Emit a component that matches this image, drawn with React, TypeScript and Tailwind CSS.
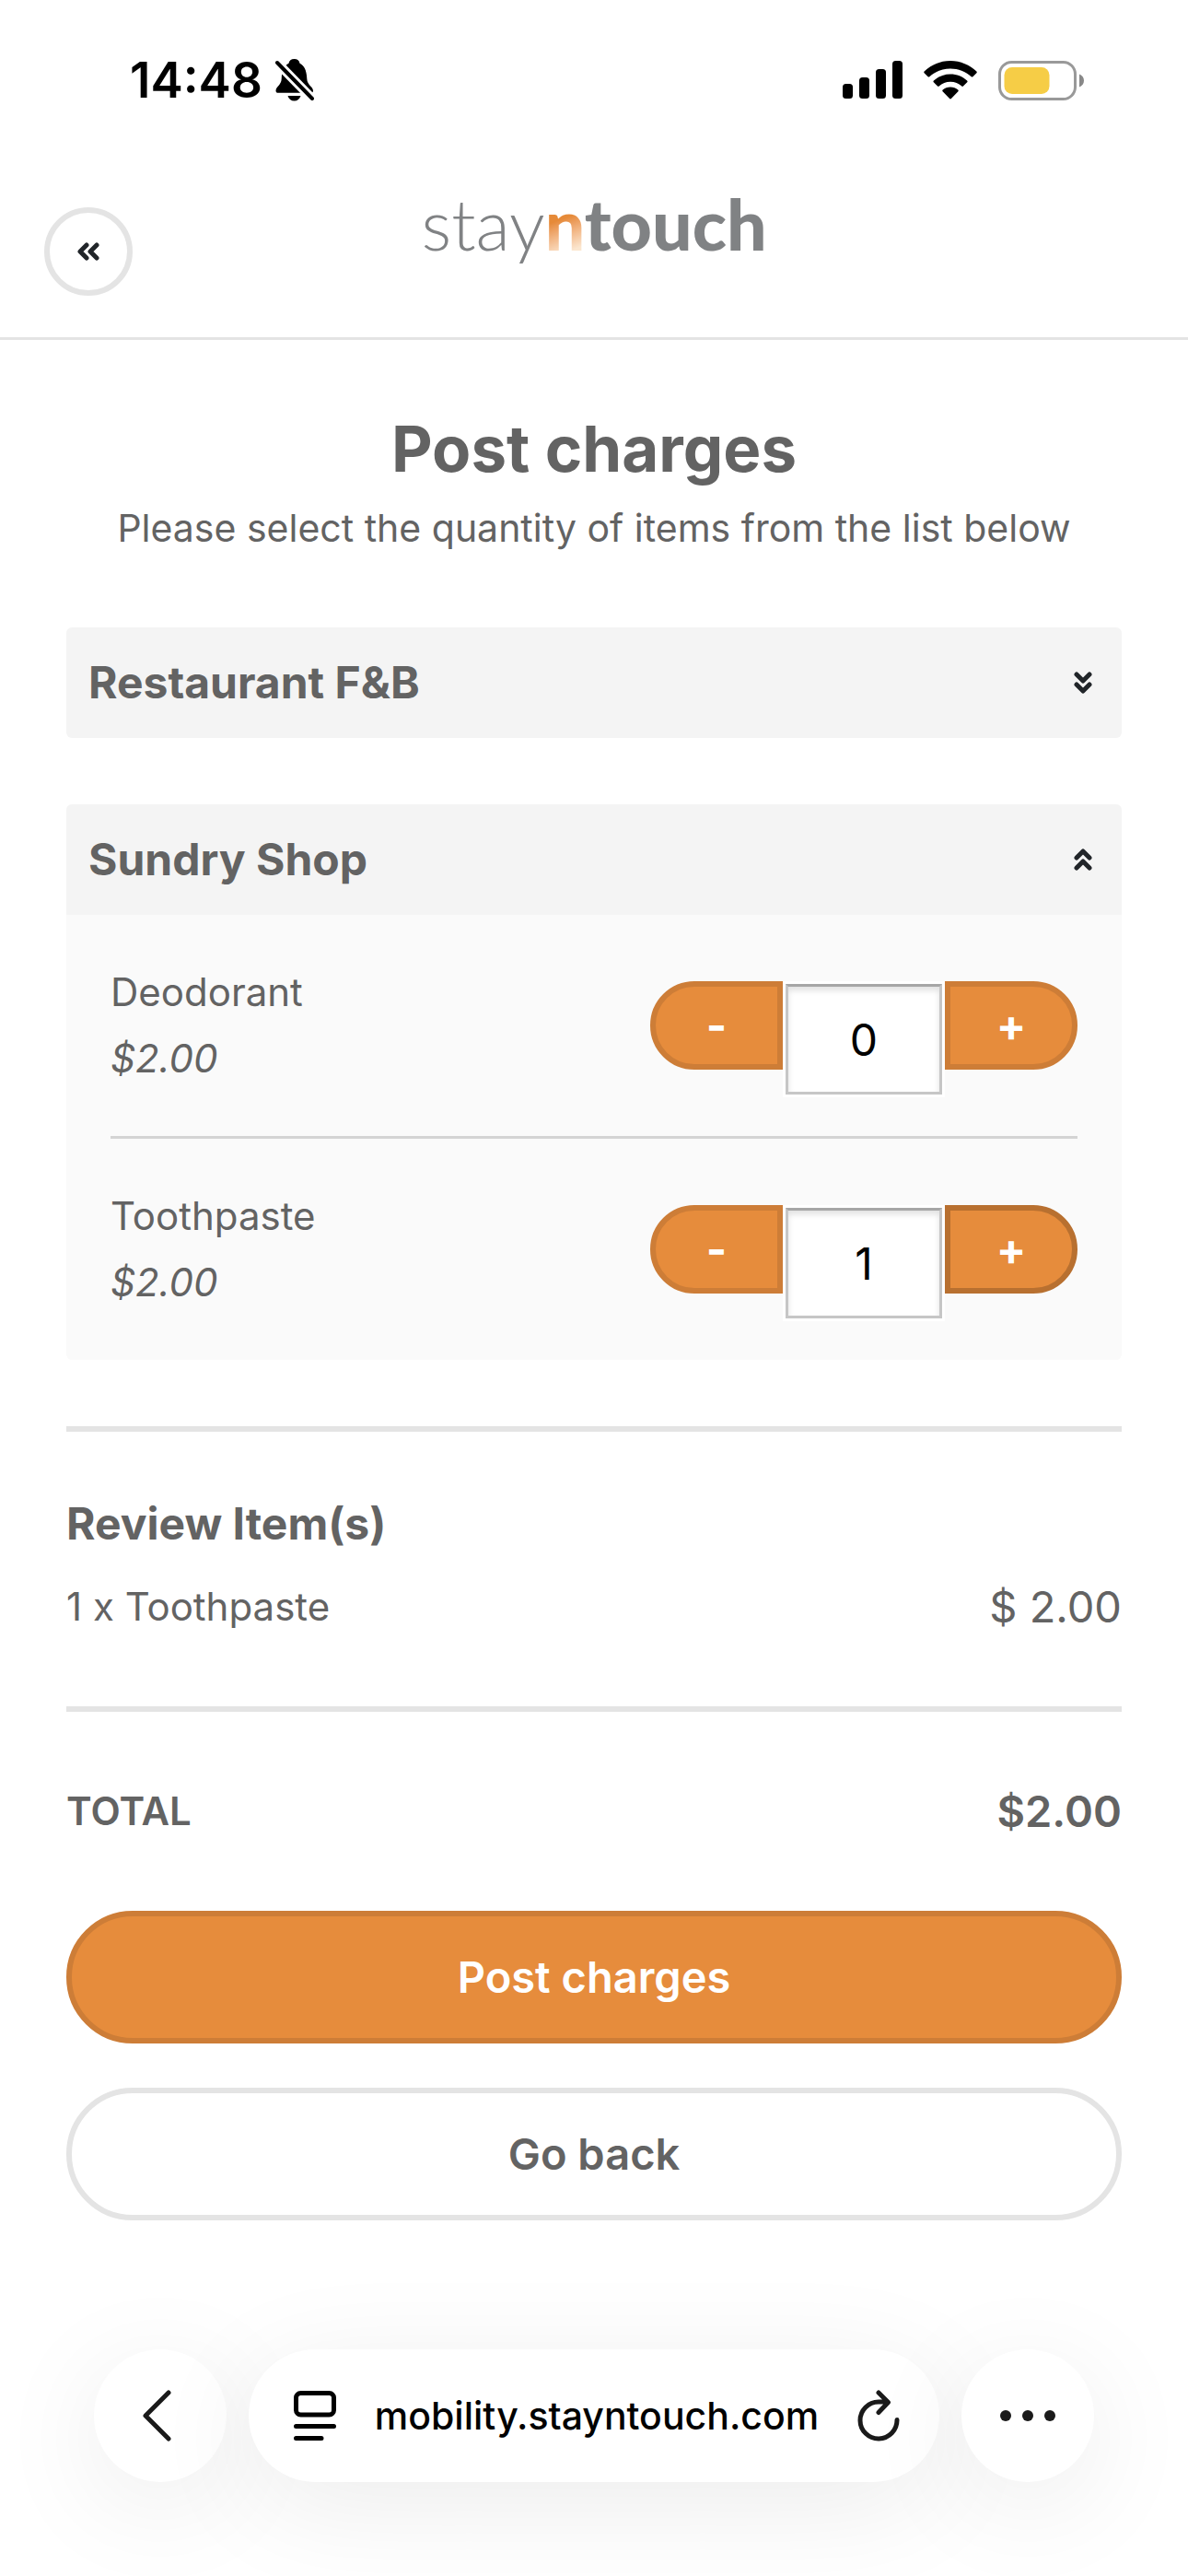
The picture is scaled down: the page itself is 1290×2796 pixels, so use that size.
import React, { useState } from 'react';

interface ShopItem {
  id: string;
  name: string;
  price: number;
}

const ITEMS: ShopItem[] = [
  { id: 'deodorant', name: 'Deodorant', price: 2 },
  { id: 'toothpaste', name: 'Toothpaste', price: 2 },
];

const BellOffIcon = () => (
  <svg viewBox="0 0 42 46" className="w-[42px] h-[46px]" aria-hidden="true">
    <path d="M0.5 34.500c0-4.500 6-6 6.200-13C7 12 10 7 14.500 4.800 15 2 17 0 20.500 0s5.500 2 6 4.800C31 7 34 12 34.300 21.500c.2 7 6.700 8.500 6.700 13 0 1.500-1 2.300-2.500 2.300H3C1.500 36.800.5 36 .5 34.500z" />
    <path d="M13.500 40h14c-1 3.500-3.500 5.500-7 5.500s-6-2-7-5.500z" />
    <path d="M-1 1L40 43" stroke="#fff" strokeWidth="10" />
    <path d="M2 4L40 43" stroke="#000" strokeWidth="4" strokeLinecap="round" />
  </svg>
);

const SignalIcon = () => (
  <svg viewBox="0 0 65 42" className="w-[65px] h-[42px]" aria-hidden="true">
    <rect x="0" y="25" width="11" height="16" rx="3.500" />
    <rect x="18" y="18" width="11" height="23" rx="3.500" />
    <rect x="36" y="9" width="11" height="32" rx="3.500" />
    <rect x="54" y="0" width="11" height="41" rx="3.500" />
  </svg>
);

const WifiIcon = () => (
  <svg viewBox="0 0 58 42" className="w-[58px] h-[42px]" aria-hidden="true">
    <path d="M29 0C40 0 50 4.500 57.400 11.500c.5.500.5 1.200 0 1.700l-4 4c-.5.500-1.200.5-1.700 0C45.500 11.500 37.500 8.500 29 8.500S12.500 11.500 6.300 17.200c-.5.500-1.200.5-1.700 0l-4-4c-.5-.5-.5-1.200 0-1.700C8 4.500 18 0 29 0z" />
    <path d="M29 14.500c7 0 13.300 2.600 18.100 7 .6.500.6 1.200.1 1.700l-4.300 4.300c-.5.500-1.100.5-1.600 0C38 24.500 33.700 22.700 29 22.700s-9 1.800-12.300 4.800c-.5.500-1.100.5-1.600 0l-4.300-4.300c-.5-.5-.5-1.200.1-1.700 4.800-4.400 11.100-7 18.100-7z" />
    <path d="M29 28.500c3.200 0 6.100 1.100 8.300 3 .6.500.6 1.200.1 1.700l-7.500 7.800c-.5.500-1.300.5-1.800 0l-7.500-7.800c-.5-.5-.5-1.200.1-1.700 2.200-1.900 5.100-3 8.300-3z" />
  </svg>
);

const BatteryIcon = () => (
  <svg viewBox="0 0 93 43" className="w-[93px] h-[43px]" aria-hidden="true">
    <rect x="1.500" y="1.500" width="82" height="40" rx="13" fill="none" stroke="#999" strokeWidth="3" />
    <rect x="6.500" y="7" width="49" height="29" rx="8.500" fill="#f6cd46" />
    <path d="M88 14.500c3.200 1.200 5 3.800 5 7s-1.800 5.800-5 7z" fill="#888" />
  </svg>
);

const DoubleChevron = ({ className }: { className: string }) => (
  <svg viewBox="0 0 24 20" className={className} fill="none" stroke="#212529" strokeWidth="5" strokeLinecap="round" strokeLinejoin="round" aria-hidden="true">
    <path d="M10 3L3 10l7 7M21 3l-7 7 7 7" />
  </svg>
);

const Logo = () => (
  <div className="font-['Lato',sans-serif] text-[77px] leading-[96px] text-[#808284]">
    <span className="font-light">stay</span>
    <span className="font-black bg-linear-160 from-[#e68a38] from-45% to-[#fbe6cf] to-80% bg-clip-text text-transparent">n</span>
    <span className="font-black">touch</span>
  </div>
);

interface StepperProps {
  item: ShopItem;
  quantity: number;
  active: boolean;
  onChange: (value: number) => void;
}

const Stepper: React.FC<StepperProps> = ({ item, quantity, active, onChange }) => (
  <div className="flex items-start">
    <button
      type="button"
      aria-label={`Remove one ${item.name}`}
      onClick={() => onChange(Math.max(0, quantity - 1))}
      className="h-24 w-36 rounded-l-full border-[6px] border-[#cd7d37] bg-[#e68c3c] text-[48px] leading-[48px] font-bold text-white"
    >
      -
    </button>
    <div className="bg-white p-[3px]">
      <input
        type="text"
        id={item.id}
        inputMode="numeric"
        value={quantity}
        onChange={(e) => onChange(parseInt(e.target.value, 10) || 0)}
        className="block h-[120px] w-[170px] border-[3px] border-[#c6c6c6] border-t-[#a6a6a6] bg-white text-center text-[48px] text-black shadow-[inset_0_4px_6px_rgba(0,0,0,0.12)] outline-none"
      />
    </div>
    <button
      type="button"
      aria-label={`Add one ${item.name}`}
      onClick={() => onChange(quantity + 1)}
      className={`h-24 w-36 rounded-r-full border-[6px] bg-[#e68c3c] text-[48px] leading-[48px] font-bold text-white ${active ? 'border-[#b87030]' : 'border-[#cd7d37]'}`}
    >
      +
    </button>
  </div>
);

export default function App() {
  const [quantities, setQuantities] = useState<Record<string, number>>({ deodorant: 0, toothpaste: 1 });
  const [lastChanged, setLastChanged] = useState('toothpaste');

  const selected = ITEMS.filter((item) => quantities[item.id] > 0);
  const total = selected.reduce((sum, item) => sum + item.price * quantities[item.id], 0);

  const handleChange = (id: string, value: number) => {
    setQuantities({ ...quantities, [id]: value });
    setLastChanged(id);
  };

  return (
    <div className="flex min-h-screen flex-col bg-white font-['Inter',sans-serif] text-[#636363]">
      {/* Phone status bar */}
      <div className="flex h-[174px] items-center justify-between pl-[141px] pr-[113px] text-black">
        <div className="flex items-center gap-3.5">
          <span className="text-[53px] leading-[60px] font-semibold">14:48</span>
          <BellOffIcon />
        </div>
        <div className="flex items-center gap-[23px]">
          <SignalIcon />
          <WifiIcon />
          <BatteryIcon />
        </div>
      </div>

      <header className="grid h-[195px] grid-cols-[1fr_auto_1fr] items-start border-b-[3px] border-[#e4e4e4] px-12">
        <button type="button" aria-label="Back" className="mt-[51px] flex size-24 items-center justify-center rounded-full border-[6px] border-[#e4e4e4]">
          <DoubleChevron className="h-5 w-6" />
        </button>
        <div className="mt-5">
          <Logo />
        </div>
      </header>

      <main className="px-[72px] pt-[70px]">
        <h1 className="text-center text-[69px] leading-[96px] font-bold">Post charges</h1>
        <p className="mt-2 text-center text-[41px] leading-[60px]">Please select the quantity of items from the list below</p>

        <button type="button" aria-expanded="false" className="mt-[78px] flex h-[120px] w-full items-center justify-between rounded-md bg-[#f4f4f4] pl-6 pr-[30px] text-[48px] font-bold">
          Restaurant F&amp;B
          <DoubleChevron className="h-5 w-6 -rotate-90" />
        </button>

        <section className="mt-[72px] overflow-hidden rounded-md bg-[#fafafa]">
          <button type="button" aria-expanded="true" className="flex h-[120px] w-full items-center justify-between bg-[#f4f4f4] pl-6 pr-[30px] text-[48px] font-bold">
            Sundry Shop
            <DoubleChevron className="h-5 w-6 rotate-90" />
          </button>
          <ul className="divide-y-[3px] divide-[#d4d4d4] px-12">
            {ITEMS.map((item) => (
              <li key={item.id} className="flex items-start justify-between pt-12 pb-[42px]">
                <label htmlFor={item.id} className="text-[42px] leading-[72px]">
                  <span className="block">{item.name}</span>
                  <span className="block italic">${item.price.toFixed(2)}</span>
                </label>
                <div className="mt-6">
                  <Stepper
                    item={item}
                    quantity={quantities[item.id]}
                    active={lastChanged === item.id}
                    onChange={(value) => handleChange(item.id, value)}
                  />
                </div>
              </li>
            ))}
          </ul>
        </section>

        <section className="mt-[72px] border-y-[6px] border-[#e4e4e4] pt-[64px] pb-[72px]">
          <h2 className="text-[48px] leading-[72px] font-bold">Review Item(s)</h2>
          {selected.map((item) => (
            <div key={item.id} className="mt-[18px] flex items-center justify-between leading-[72px]">
              <span className="text-[42px]">{quantities[item.id]} x {item.name}</span>
              <span className="text-[47px]">$ {(item.price * quantities[item.id]).toFixed(2)}</span>
            </div>
          ))}
        </section>

        <div className="mt-[72px] flex items-center justify-between leading-[72px] font-semibold">
          <span className="text-[42px]">TOTAL</span>
          <span className="text-[47px]">${total.toFixed(2)}</span>
        </div>

        <button type="button" className="mt-[72px] h-36 w-full rounded-full border-[6px] border-[#cd7d37] bg-[#e68c3c] text-[47px] font-semibold text-white">
          Post charges
        </button>
        <button type="button" className="mt-12 h-36 w-full rounded-full border-[6px] border-[#e4e4e4] bg-white text-[47px] font-semibold">
          Go back
        </button>
      </main>

      {/* Browser toolbar */}
      <nav className="mt-auto flex gap-6 overflow-hidden px-[102px] pt-[120px] pb-[102px] text-black">
        <button type="button" aria-label="Previous page" className="flex size-36 items-center justify-center rounded-full bg-white shadow-[0_24px_120px_rgba(0,0,0,0.08)]">
          <svg viewBox="0 0 32 56" className="mr-2 h-14 w-8" fill="none" stroke="#1a1a1a" strokeWidth="5" strokeLinecap="round" strokeLinejoin="round">
            <path d="M29 3L4 28l25 25" />
          </svg>
        </button>
        <div className="flex h-36 flex-1 items-center justify-between rounded-full bg-white pl-[49px] pr-[43px] shadow-[0_24px_120px_rgba(0,0,0,0.08)]">
          <button type="button" aria-label="Page settings">
            <svg viewBox="0 0 46 54" className="h-[54px] w-[46px]" fill="none" stroke="#000" strokeWidth="5" strokeLinecap="round">
              <rect x="2.500" y="2.500" width="41" height="23.500" rx="5" />
              <path d="M2.500 38.500h41M2.500 51.500H30" />
            </svg>
          </button>
          <a href="#" className="text-[41px] leading-[60px] font-medium">mobility.stayntouch.com</a>
          <button type="button" aria-label="Reload">
            <svg viewBox="0 0 46 56" className="h-14 w-[46px]" fill="none" stroke="#1a1a1a" strokeWidth="5" strokeLinecap="round" strokeLinejoin="round">
              <path d="M43 32.500A20 20 0 1 1 23 13h10M23 3L33.500 13.500 23 24.500" />
            </svg>
          </button>
        </div>
        <button type="button" aria-label="More" className="flex size-36 items-center justify-center rounded-full bg-white shadow-[0_24px_120px_rgba(0,0,0,0.08)]">
          <svg viewBox="0 0 60 12" className="h-3 w-[60px]" fill="#1a1a1a">
            <circle cx="6" cy="6" r="6" />
            <circle cx="30" cy="6" r="6" />
            <circle cx="54" cy="6" r="6" />
          </svg>
        </button>
      </nav>
    </div>
  );
}
